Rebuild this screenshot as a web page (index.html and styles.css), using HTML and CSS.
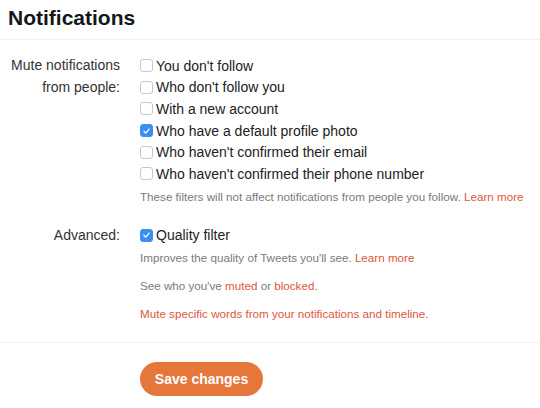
FILE: index.html
```html
<!DOCTYPE html>
<html>
<head>
<meta charset="utf-8">
<link rel="stylesheet" href="styles.css">
</head>
<body>
<div class="page">
  <header class="header">
    <h1 class="title">Notifications</h1>
  </header>
  <section class="form">
    <div class="field">
      <div class="label">Mute notifications<br>from people:</div>
      <div class="controls">
        <label class="check"><span class="box"></span>You don't follow</label>
        <label class="check"><span class="box"></span>Who don't follow you</label>
        <label class="check"><span class="box"></span>With a new account</label>
        <label class="check"><span class="box checked"><svg viewBox="0 0 12 12" width="12" height="12"><path d="M3.2 6.3 L5.2 8.3 L8.9 3.9" fill="none" stroke="#fff" stroke-width="1.4" stroke-linecap="round" stroke-linejoin="round"/></svg></span>Who have a default profile photo</label>
        <label class="check"><span class="box"></span>Who haven't confirmed their email</label>
        <label class="check"><span class="box"></span>Who haven't confirmed their phone number</label>
        <p class="help first">These filters will not affect notifications from people you follow. <a class="link">Learn more</a></p>
      </div>
    </div>
    <div class="field advanced">
      <div class="label">Advanced:</div>
      <div class="controls">
        <label class="check"><span class="box checked"><svg viewBox="0 0 12 12" width="12" height="12"><path d="M3.2 6.3 L5.2 8.3 L8.9 3.9" fill="none" stroke="#fff" stroke-width="1.4" stroke-linecap="round" stroke-linejoin="round"/></svg></span>Quality filter</label>
        <p class="help first">Improves the quality of Tweets you'll see. <a class="link">Learn more</a></p>
        <p class="help">See who you've <a class="link">muted</a> or <a class="link">blocked</a>.</p>
        <p class="help"><a class="link">Mute specific words from your notifications and timeline.</a></p>
      </div>
    </div>
  </section>
  <div class="actions">
    <button class="save">Save changes</button>
  </div>
</div>
</body>
</html>
```

FILE: styles.css
```css
* { box-sizing: border-box; }
html, body { margin: 0; padding: 0; background: #fff; }
body {
  font-family: "Liberation Sans", Arial, sans-serif;
  color: #292f33;
  width: 540px;
  height: 408px;
  overflow: hidden;
}
.header {
  height: 40px;
  border-bottom: 1px solid #f2f2f2;
  padding: 4px 8px 0;
}
.title {
  margin: 0;
  font-size: 21px;
  line-height: 28px;
  font-weight: bold;
  color: #14171a;
}
.form {
  padding: 15px 0 20px;
  border-bottom: 1px solid #f0f0f0;
}
.field {
  display: grid;
  grid-template-columns: 120px 1fr;
  column-gap: 20px;
}
.field.advanced { margin-top: 20px; }
.label {
  text-align: right;
  font-size: 14px;
  line-height: 21.6px;
  color: #333;
}
.controls { display: flex; flex-direction: column; }
.check {
  display: flex;
  align-items: center;
  height: 21.6px;
  font-size: 14px;
  color: #222;
}
.box {
  width: 13px;
  height: 13px;
  border: 1px solid #c8c8c8;
  border-radius: 3px;
  background: #fff;
  margin-right: 3px;
  display: flex;
  align-items: center;
  justify-content: center;
  flex: none;
}
.box.checked {
  background: #3b8ff0;
  border-color: #3b8ff0;
}
.box svg { display: block; }
.help {
  margin: 12px 0 0;
  font-size: 11.65px;
  line-height: 16px;
  color: #7a7a7a;
  white-space: nowrap;
}
.help.first { margin-top: 4px; }
.link { color: #e0553e; }
.actions { padding: 19px 0 0 140px; }
.save {
  width: 123px;
  height: 34px;
  border: none;
  border-radius: 17px;
  background: #e5773b;
  color: #fff;
  font-family: "Liberation Sans", Arial, sans-serif;
  font-weight: bold;
  font-size: 14px;
  padding: 0;
}
```
